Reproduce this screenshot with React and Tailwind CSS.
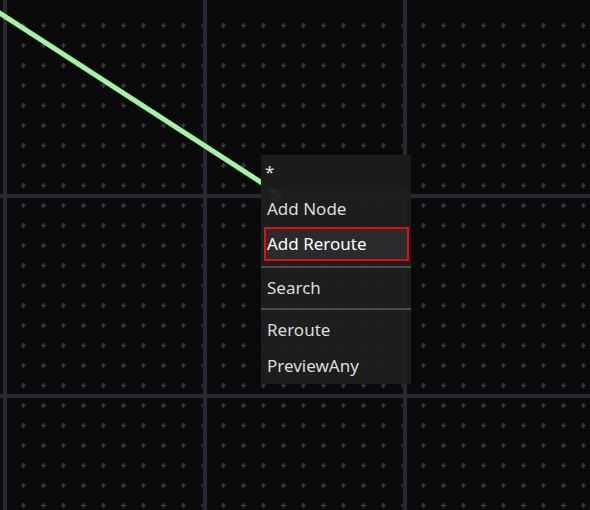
import React from 'react'

const items = [
  { label: 'Add Node' },
  { label: 'Add Reroute', active: true },
  { sep: true },
  { label: 'Search' },
  { sep: true },
  { label: 'Reroute' },
  { label: 'PreviewAny' },
]

function Canvas() {
  return (
    <svg width="590" height="510" className="block">
      <defs>
        <pattern id="plus" x="0" y="0" width="20" height="20" patternUnits="userSpaceOnUse">
          <path d="M1 5.5h5M3.5 3v5" stroke="#3a3c44" strokeWidth="1.4" />
        </pattern>
      </defs>
      <rect width="590" height="510" fill="#0a0a0a" />
      <rect x="20" y="10" width="570" height="500" fill="url(#plus)" />
      <g fill="#272932">
        <rect x="3" y="0" width="4" height="510" />
        <rect x="203" y="0" width="4" height="510" />
        <rect x="403" y="0" width="4" height="510" />
        <rect x="0" y="194" width="590" height="4" />
        <rect x="0" y="394" width="590" height="4" />
      </g>
      <circle cx="276" cy="196" r="7" fill="#6f6420" />
      <line x1="-2" y1="12" x2="276" y2="192" stroke="#a2f3a2" strokeWidth="5" />
    </svg>
  )
}

function Menu() {
  return (
    <div
      className="absolute left-[261px] top-[155px] w-[150px] text-[17px] text-[#dcdcdc] bg-[#1f1f1f]/95"
      style={{ fontFamily: '"Noto Sans", "Liberation Sans", sans-serif' }}
    >
      <div className="h-[34px] flex items-center pl-[4px] bg-[#1b1b1b] text-[#e6e6e6]">*</div>
      <div className="pt-[2px]">
        {items.map((it, i) => {
          if (it.sep) {
            return (
              <div
                key={i}
                className={`h-[2px] bg-[#4c4c4c] ${i === 2 ? 'mt-[5px]' : ''}`}
              />
            )
          }
          const h =
            it.label === 'Search'
              ? 'h-[40px]'
              : it.label === 'Add Reroute'
              ? 'h-[34px] mt-[1px]'
              : it.label === 'Reroute'
              ? 'h-[36px] mt-[2px]'
              : it.label === 'PreviewAny'
              ? 'h-[36px]'
              : 'h-[35px]'
          return (
            <div
              key={i}
              className={`${h} mx-[3px] mr-[2px] flex items-center pl-[1px] border-2 ${
                it.active
                  ? 'border-[#e01010] bg-[#2b2b2d] text-white'
                  : 'border-transparent'
              }`}
            >
              {it.label}
            </div>
          )
        })}
      </div>
    </div>
  )
}

export default function App() {
  return (
    <div className="relative w-[590px] h-[510px] overflow-hidden bg-[#0a0a0a]">
      <Canvas />
      <Menu />
    </div>
  )
}
